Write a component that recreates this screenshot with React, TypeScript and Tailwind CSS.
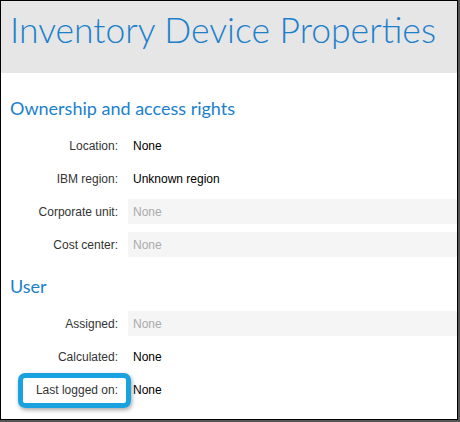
import React from "react";

type Row = { label: string; value: string; field?: boolean };

function PropRow({ label, value, field }: Row) {
  return (
    <div className="flex items-center h-[25px]">
      <div className="w-[117px] shrink-0 text-right text-[12px] text-[#333]">{label}</div>
      <div
        className={
          "ml-[10px] flex-1 h-[25px] flex items-center pl-[5px] text-[12px] " +
          (field ? "bg-[#f5f5f5] text-[#aaa]" : "text-black")
        }
      >
        {value}
      </div>
    </div>
  );
}

export default function App() {
  const sec1: Row[] = [
    { label: "Location:", value: "None" },
    { label: "IBM region:", value: "Unknown region" },
    { label: "Corporate unit:", value: "None", field: true },
    { label: "Cost center:", value: "None", field: true },
  ];
  const sec2: Row[] = [
    { label: "Assigned:", value: "None", field: true },
    { label: "Calculated:", value: "None" },
    { label: "Last logged on:", value: "None" },
  ];
  return (
    <div className="w-[460px] h-[422px] bg-white" style={{ fontFamily: '"Liberation Sans", Arial, sans-serif' }}>
      <div className="relative w-[458px] h-[420px] border border-black shadow-[1px_1px_0_1px_#555,2px_2px_1px_1px_#bbb] overflow-hidden">
        <div className="h-[72px] bg-[#e6e6e6] pl-[9px] pt-[7px]">
          <div
            className="text-[35.5px] leading-[44px] text-[#1b80cc] font-light"
            style={{ fontFamily: "Lato, sans-serif" }}
          >
            Inventory Device Properties
          </div>
        </div>
        <div className="pl-[9px] pt-[23px]">
          <div className="text-[18px] leading-[24px] text-[#1b80cc]" style={{ fontFamily: "Lato, sans-serif" }}>
            Ownership and access rights
          </div>
        </div>
        <div className="flex flex-col gap-[8px] mt-[13px]">
          {sec1.map((r) => (
            <PropRow key={r.label} {...r} />
          ))}
        </div>
        <div className="pl-[9px] mt-[17px]">
          <div className="text-[18px] leading-[24px] text-[#1b80cc]" style={{ fontFamily: "Lato, sans-serif" }}>
            User
          </div>
        </div>
        <div className="flex flex-col gap-[8px] mt-[13px]">
          {sec2.map((r) => (
            <PropRow key={r.label} {...r} />
          ))}
        </div>
        <div className="absolute left-[17px] top-[372px] w-[113px] h-[35px] rounded-[7px] border-[5px] border-[#1aa2e0] shadow-[1px_2px_4px_rgba(0,0,0,0.35)]" />
      </div>
    </div>
  );
}
